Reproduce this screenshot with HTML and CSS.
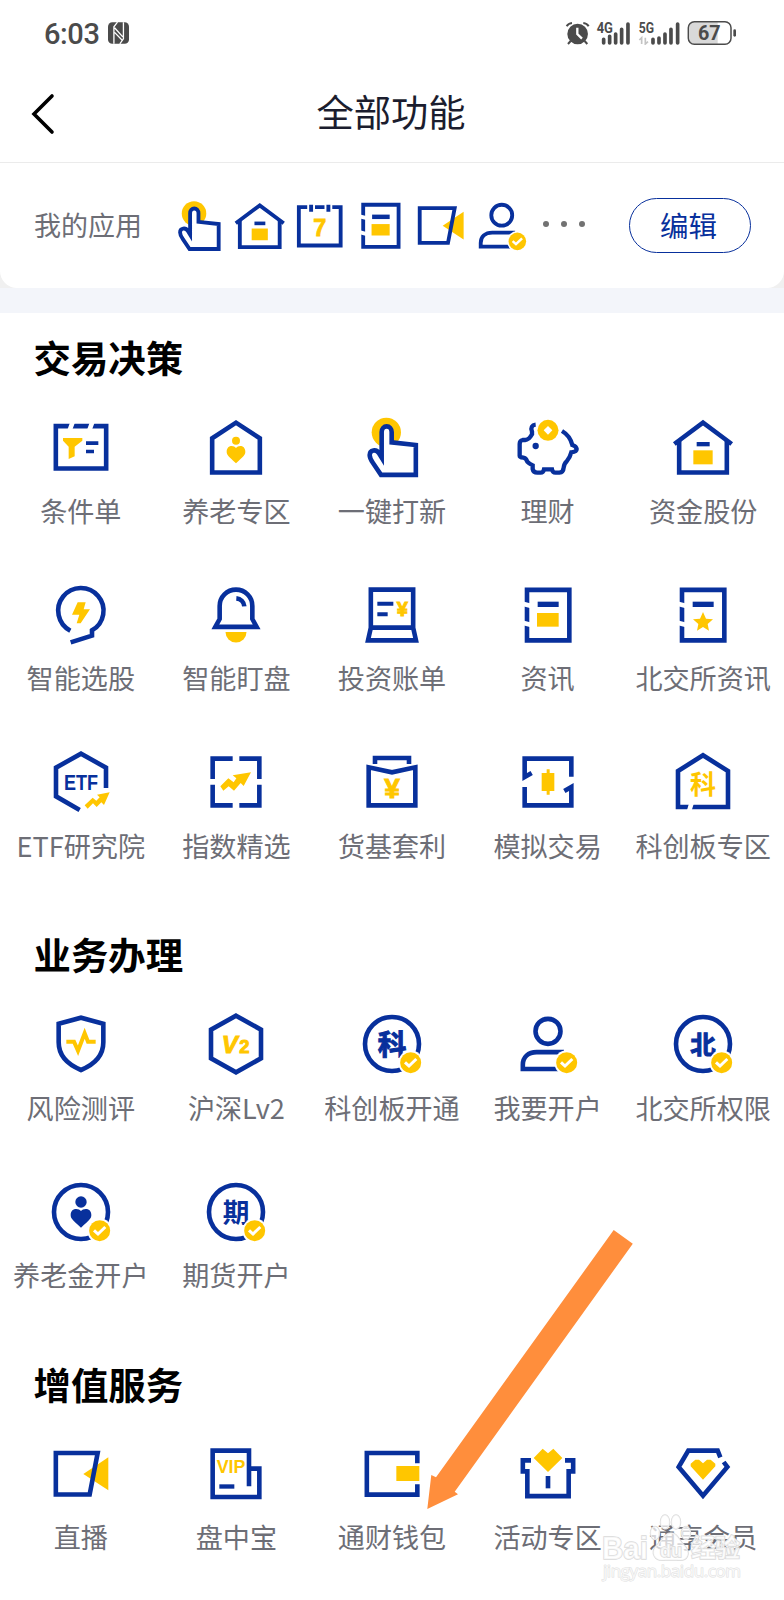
FILE: index.html
```
<!DOCTYPE html>
<html lang="zh-CN">
<head>
<meta charset="utf-8">
<title>全部功能</title>
<link rel="stylesheet" href="styles.css">
</head>
<body>
<svg class="defs" width="0" height="0">
  <symbol id="badge" viewBox="-96 -96 192 192">
    <circle class="w" cx="56" cy="56" r="37"/><circle class="y" cx="56" cy="56" r="31.5"/>
    <path d="M39 55 L51 66 L73 45" fill="none" stroke="#fff" stroke-width="9"/>
  </symbol>
  <symbol id="hand" viewBox="-96 -96 192 192">
    <circle class="y" cx="-17" cy="-44" r="44"/>
    <path class="l wf" d="M-1 -14 V-45 A15 17 0 0 0 -31 -45 V32 L-39 19 C-47 5 -67 8 -67 24 C-67 33 -62 41 -57 48 L-33 83.5 H71.5 V-6 L-1 -14Z"/>
  </symbol>
  <symbol id="house" viewBox="-96 -96 192 192">
    <path class="l" d="M-71.5 -18 V76.5 H71.5 V-18"/><path class="l" d="M-86 -9 L0 -73 L86 -9"/>
    <rect class="b" x="-19" y="-15" width="39" height="13"/><rect class="y" x="-29" y="10" width="58" height="42"/>
  </symbol>
  <symbol id="book" viewBox="-96 -96 192 192">
    <path class="l" d="M-63 -75.5 H64 V76 H-63Z"/><rect class="b" x="-31" y="-40" width="63" height="16"/>
    <path d="M-76 -34 L-50 -27 M-76 23 L-50 30" fill="none" stroke="#fff" stroke-width="14"/>
  </symbol>
  <symbol id="video" viewBox="-96 -96 192 192">
    <path class="y" d="M7 0 L82 -50 V49Z"/><path class="l" d="M-75.5 -63 H50 L26 61.5 H-75.5Z"/>
  </symbol>
  <symbol id="person" viewBox="-96 -96 192 192">
    <circle class="l" cx="0" cy="-38" r="37.5"/>
    <path class="l" d="M48 24.5 H-34 C-60 24.5 -75.5 40 -75.5 62 V75 H40"/><use href="#badge" x="-96" y="-96" width="192" height="192"/>
  </symbol>
</svg>

<div class="status">
  <span class="time">6:03</span>
  <svg class="nfc" viewBox="0 0 64 66"><rect width="64" height="66" rx="13" fill="#4b4b4b"/><path d="M18 66 V14 L29 0 M20 17 L45 45 M20 31 L44 56 M47 0 V51 L36 66" fill="none" stroke="#fff" stroke-width="4"/></svg>
  <div class="signals">
    <svg width="25.3" height="24.7" viewBox="518 62 76 74"><circle cx="556" cy="101" r="31" fill="#4b4b4b"/><path d="M523 78 Q528 69 539 68 M589 78 Q584 69 573 68 M535 122 L527 131 M577 122 L585 131" fill="none" stroke="#4b4b4b" stroke-width="6"/><path d="M555 82 V101 L569 115" fill="none" stroke="#fff" stroke-width="7"/></svg>
    <svg width="35.3" height="24.7" viewBox="614 62 106 74"><text class="net" x="616" y="98" textLength="49" lengthAdjust="spacingAndGlyphs">4G</text><path class="bars" d="M637 117 V128 M655 108 V128 M673 101 V128 M691 87 V128 M710 71 V128"/></svg>
    <svg width="43.3" height="24.7" viewBox="738 62 130 74"><text class="net" x="740" y="98" textLength="46" lengthAdjust="spacingAndGlyphs">5G</text><path d="M742 119 L749 112 V131 M768 124 L760 131 V112" fill="none" stroke="#c4c4c4" stroke-width="5"/><path class="bars" d="M783 117 V128 M801 113 V128 M819 101 V128 M837 87 V128 M857 71 V128"/></svg>
    <svg width="50" height="26" viewBox="886 60 150 78"><path d="M906 67 H978 V131 H906 Q893 131 893 118 V80 Q893 67 906 67Z" fill="#d9d9d9"/><rect x="890" y="65" width="128" height="68" rx="18" fill="none" stroke="#4b4b4b" stroke-width="4.5"/><path d="M1029 92 V106" stroke="#4b4b4b" stroke-width="8" stroke-linecap="round"/><text x="953" y="121" text-anchor="middle" class="bat" textLength="68" lengthAdjust="spacingAndGlyphs">67</text></svg>
  </div>
</div>

<div class="header">
  <svg class="back" width="24" height="42" viewBox="0 0 24 42"><path d="M21 3 L3 21 L21 39" fill="none" stroke="#000" stroke-width="3.6" stroke-linecap="round"/></svg>
  <h1 class="title">全部功能</h1>
</div>

<div class="mine-wrap">
  <div class="mine">
    <span class="mine-label">我的应用</span>
    <div class="mine-icons">
      <svg><use href="#hand"/></svg>
      <svg><use href="#house"/></svg>
      <svg viewBox="-96 -96 192 192"><path class="l" d="M-75 -67 H75 V71 H-75Z"/><path class="w" d="M-45 -76 H-17 V-58 H-45Z M17 -76 H45 V-58 H17Z"/><path class="b" d="M-38 -75 H-24 V-50 H-38Z M24 -75 H38 V-50 H24Z"/><text class="t y bold" x="0" y="38" font-size="84">7</text></svg>
      <svg viewBox="-96 -96 192 192"><use href="#book" x="-96" y="-96" width="192" height="192"/><rect class="y" x="-33" y="-6" width="65" height="41"/></svg>
      <svg><use href="#video"/></svg>
      <svg><use href="#person"/></svg>
    </div>
    <div class="dots"><i></i><i></i><i></i></div>
    <button class="edit">编辑</button>
  </div>
</div>

<section class="section first">
  <h2 class="heading">交易决策</h2>
  <div class="grid">
    <div class="cell"><svg class="icon" viewBox="-96 -96 192 192"><path class="l" d="M-75.5 -62.5 H75.5 V64.5 H-75.5Z"/><path d="M-34 -50 L-25 -75 M25 -50 L34 -75" stroke="#fff" stroke-width="14"/><path class="y" d="M-54 -27 H4 V-19 L-19 -1 V28 L-37 36 V-1 L-54 -19Z"/><path class="b" d="M15 -17 H52 V-6 H15Z M15 8 H39 V19 H15Z"/></svg><span class="label">条件单</span></div>
    <div class="cell"><svg class="icon" viewBox="-96 -96 192 192"><path class="l" d="M-71.5 76.5 V-26 L0 -73 L71.5 -26 V76.5Z"/><circle class="y" cx="0" cy="-19" r="12"/><path class="y" d="M0 3 C-7 -7 -28 -6 -28 14 C-28 25 -22 27 0 49 C22 27 28 25 28 14 C28 -6 7 -7 0 3Z"/></svg><span class="label">养老专区</span></div>
    <div class="cell"><svg class="icon"><use href="#hand"/></svg><span class="label">一键打新</span></div>
    <div class="cell"><svg class="icon" viewBox="-96 -96 192 192"><path class="l pig" d="M-37 -67 C-48 -66 -53 -58 -48 -46 V-38 C-54 -27 -59 -21 -68 -21 H-76 Q-85 -19 -85 -9 V26 Q-85 31 -74 32 Q-66 33 -62 44 Q-56 50 -46 55 V66 Q-44 77 -32 77 H-22 Q-14 77 -12 67 H12 Q14 77 22 77 H34 Q46 76 47 62 Q48 50 56 43 Q66 32 70 16 Q86 14 86 6 Q85 -2 73 -6 Q66 -34 42 -48"/><circle class="b" cx="-37" cy="-3" r="9.5"/><circle class="y" cx="0" cy="-50" r="31.5"/><path class="w" d="M0 -63 L13 -50 L0 -37 L-13 -50Z"/></svg><span class="label">理财</span></div>
    <div class="cell"><svg class="icon"><use href="#house"/></svg><span class="label">资金股份</span></div>

    <div class="cell"><svg class="icon" viewBox="-96 -96 192 192"><path class="l" d="M-32 47 A68 68 0 1 1 33 46 V62 L-31 82"/><path class="y" d="M-10 -38 H14 L8 -17 H27 L-1 25 H-13 L-5 -1 H-27Z"/></svg><span class="label">智能选股</span></div>
    <div class="cell"><svg class="icon" viewBox="-96 -96 192 192"><path class="l" d="M-62 35.5 L-49 12 V-27 A49 49 0 0 1 49 -27 V12 L62 35.5Z M1 -50 A26 26 0 0 1 25 -26"/><path class="y" d="M-31.5 51 A31.5 31.5 0 0 0 31.5 51Z"/></svg><span class="label">智能盯盘</span></div>
    <div class="cell"><svg class="icon" viewBox="-96 -96 192 192"><path class="l" d="M-63.5 38 V-76 H63.5 V38Z L-72 76 H72 L63.5 38"/><path class="b" d="M-44 -40 H4 V-28 H-44Z M-44 -8 H-13 V4 H-44Z"/><text class="t y bold" x="31" y="3" font-size="60">¥</text></svg><span class="label">投资账单</span></div>
    <div class="cell"><svg class="icon" viewBox="-96 -96 192 192"><use href="#book" x="-96" y="-96" width="192" height="192"/><rect class="y" x="-33" y="-6" width="65" height="41"/></svg><span class="label">资讯</span></div>
    <div class="cell"><svg class="icon" viewBox="-96 -96 192 192"><use href="#book" x="-96" y="-96" width="192" height="192"/><path class="y" d="M0 -9 L9 11 L30 13 L14 27 L18 47 L0 36 L-18 47 L-14 27 L-30 13 L-9 11Z"/></svg><span class="label">北交所资讯</span></div>

    <div class="cell"><svg class="icon" viewBox="-96 -96 192 192"><path class="l" d="M75 18 V-43 L0 -85 L-75 -43 V43 L-4 84"/><text class="t b" x="0" y="24" font-size="67" textLength="102" lengthAdjust="spacingAndGlyphs">ETF</text><path class="y" d="M11 70 L35 47 L46 56 L56 46 L48 38 L86 31 L69 69 L61 61 L47 75 L36 64 L20 80Z"/></svg><span class="label">ETF研究院</span></div>
    <div class="cell"><svg class="icon" viewBox="-96 -96 192 192"><path class="l" d="M-10 -70 H-70 V-9 M10 -70 H70 V-9 M-10 70 H-70 V8 M10 70 H70 V8"/><path class="y" d="M-47 13 L-23 -11 L-7 1 L1 -11 L-10 -20 L45 -29 L23 12 L14 3 L-6 26 L-22 13 L-38 26Z"/></svg><span class="label">指数精选</span></div>
    <div class="cell"><svg class="icon" viewBox="-96 -96 192 192"><path class="l" d="M-51 -54 V-72 H51 V-54 M-70 -44 V70 H70 V-44 L0 -29Z"/><text class="t y bold" x="0" y="47" font-size="84">¥</text></svg><span class="label">货基套利</span></div>
    <div class="cell"><svg class="icon" viewBox="-96 -96 192 192"><path class="l" d="M-49 -27 L-70 -15 V-70 H70 V-16 M49 27 L70 15 V70 H-70 V15"/><path class="y" d="M-19 -27 H-4 V-38 H5 V-27 H19 V27 H5 V38 H-4 V27 H-19Z"/></svg><span class="label">模拟交易</span></div>
    <div class="cell"><svg class="icon" viewBox="-96 -96 192 192"><path class="l" d="M-75 75 V-33 L0 -80 L75 -33 V75Z"/><path d="M-42 88 L-34 62" stroke="#fff" stroke-width="14"/><text class="t y" x="0" y="35" font-size="78">科</text></svg><span class="label">科创板专区</span></div>
  </div>
</section>

<section class="section">
  <h2 class="heading">业务办理</h2>
  <div class="grid">
    <div class="cell"><svg class="icon" viewBox="-96 -96 192 192"><path class="l" d="M-67 -61 L0 -79 L67 -61 V-5 C67 35 44 60 0 78 C-44 60 -67 35 -67 -5Z"/><path d="M-44 -7 H-21 L-9 20 L11 -32 L21 -7 H44" fill="none" stroke="#ffc600" stroke-width="12"/></svg><span class="label">风险测评</span></div>
    <div class="cell"><svg class="icon" viewBox="-96 -96 192 192"><path class="l" d="M0 -85 L75 -43 V43 L0 85 L-75 43 V-43Z"/><text class="t y bold" x="-19" y="26" font-size="72" font-style="italic">V</text><text class="t y bold" x="25" y="26" font-size="55">2</text></svg><span class="label">沪深Lv2</span></div>
    <div class="cell"><svg class="icon" viewBox="-96 -96 192 192"><circle class="l" r="81"/><text class="t b bold" x="0" y="32" font-size="86">科</text><use href="#badge" x="-96" y="-96" width="192" height="192"/></svg><span class="label">科创板开通</span></div>
    <div class="cell"><svg class="icon"><use href="#person"/></svg><span class="label">我要开户</span></div>
    <div class="cell"><svg class="icon" viewBox="-96 -96 192 192"><circle class="l" r="81"/><text class="t b bold" x="0" y="29" font-size="76">北</text><use href="#badge" x="-96" y="-96" width="192" height="192"/></svg><span class="label">北交所权限</span></div>

    <div class="cell"><svg class="icon" viewBox="-96 -96 192 192"><circle class="l" r="81"/><circle class="b" cx="0" cy="-30" r="17"/><path class="b" d="M0 -3 C-7 -12 -31 -13 -31 9 C-31 20 -25 24 0 47 C25 24 31 20 31 9 C31 -13 7 -12 0 -3Z"/><use href="#badge" x="-96" y="-96" width="192" height="192"/></svg><span class="label">养老金开户</span></div>
    <div class="cell"><svg class="icon" viewBox="-96 -96 192 192"><circle class="l" r="81"/><text class="t b" x="0" y="31" font-size="80">期</text><use href="#badge" x="-96" y="-96" width="192" height="192"/></svg><span class="label">期货开户</span></div>
  </div>
</section>

<section class="section">
  <h2 class="heading">增值服务</h2>
  <div class="grid">
    <div class="cell"><svg class="icon"><use href="#video"/></svg><span class="label">直播</span></div>
    <div class="cell"><svg class="icon" viewBox="-96 -96 192 192"><path class="l" d="M39 37 V-70 H-70 V69 H70 V-16 H39"/><rect class="b" x="-50" y="31" width="45" height="13"/><text class="t y" x="-15" y="-4" font-size="53" textLength="86" lengthAdjust="spacingAndGlyphs">VIP</text></svg><span class="label">盘中宝</span></div>
    <div class="cell"><svg class="icon" viewBox="-96 -96 192 192"><path class="l" d="M76 -32 V-63 H-75.5 V62 H76 V31"/><rect class="y" x="13" y="-24" width="69" height="45"/></svg><span class="label">通财钱包</span></div>
    <div class="cell"><svg class="icon" viewBox="-96 -96 192 192"><path class="l" d="M-51 -41 H-75.5 V-8 H-62 V66.5 H62 V-8 H75.5 V-41 H51"/><path class="w" d="M-58 -49 L-48 -48 L0 2 L48 -48 L58 -49 L50 -60 H-50Z"/><path class="y" d="M-43 -48 L-16 -76 L0 -62 L16 -76 L43 -48 L0 -6Z"/><rect class="b" x="-7" y="6" width="14" height="37"/></svg><span class="label">活动专区</span></div>
    <div class="cell"><svg class="icon" viewBox="-96 -96 192 192"><path class="l" d="M52 -50 L44 -70 H-44 L-73 -21 L0 65 L73 -21 L62 -36"/><path class="y" d="M-37 -23 V-31 L-23 -43 H-12 L0 -32 L12 -43 H23 L37 -31 V-23 L0 17Z"/></svg><span class="label">通享会员</span></div>
  </div>
</section>

<svg class="overlay" width="784" height="1600" viewBox="0 0 784 1600">
  <path fill="#ff8e3c" d="M613.7 1230 L632.8 1243.7 L454.7 1491.7 L458 1494.3 L427.3 1509 L431.3 1475 L436 1477.3Z"/>
  <g class="mark">
    <text x="602" y="1559" font-size="32" textLength="46" lengthAdjust="spacingAndGlyphs">Bai</text>
    <ellipse cx="655" cy="1533" rx="4.5" ry="6.5"/><ellipse cx="665" cy="1522" rx="4.5" ry="7"/><ellipse cx="676" cy="1522" rx="4.5" ry="7"/><ellipse cx="686" cy="1533" rx="4.5" ry="6.5"/>
    <path d="M671 1533 C664 1533 662 1541 656 1546 C650 1553 655 1562 665 1560 H677 C688 1562 691 1553 685 1546 C679 1541 678 1533 671 1533Z"/>
    <text x="660" y="1557" font-size="18">du</text>
    <text class="cjk" x="691" y="1557" font-size="25" textLength="49">经验</text>
    <text class="url" x="603" y="1577" font-size="17" textLength="138">jingyan.baidu.com</text>
  </g>
</svg>
</body>
</html>
```
FILE: styles.css
```
* { box-sizing: border-box; }
body {
  margin: 0;
  width: 784px;
  height: 1600px;
  position: relative;
  overflow: hidden;
  background: #fff;
  font-family: "Noto Sans CJK SC", sans-serif;
}
.defs { position: absolute; }

/* icon paint */
.l { fill: none; stroke: #08309c; stroke-width: 13.8; }
.pig { stroke-width: 13; }
.wf { fill: #fff; }
.b { fill: #08309c; }
.y { fill: #ffc600; }
.w { fill: #fff; }
.t { font-family: "Liberation Sans", "Noto Sans CJK SC", sans-serif; font-weight: 700; text-anchor: middle; }
.bold { stroke-width: 3; }
.bold.y { stroke: #ffc600; }
.bold.b { stroke: #08309c; }

.status { display: flex; align-items: center; height: 66px; padding: 0 46.7px 0 44px; }
.time { padding-top: 3px; font: 500 29px/1 Roboto, sans-serif; color: #4b4b4b; letter-spacing: -0.4px; }
.nfc { width: 21px; height: 22px; margin-left: 8px; }
.signals { display: flex; align-items: center; gap: 6.2px; margin-left: auto; }
.net { font: 700 43px Roboto, sans-serif; fill: #4b4b4b; }
.bat { font: 700 63px Roboto, sans-serif; fill: #4b4b4b; }
.bars { fill: none; stroke: #4b4b4b; stroke-width: 11; stroke-linecap: round; }

.header {
  display: grid;
  grid-template-columns: 120px 1fr 122px;
  align-items: center;
  height: 97px;
  border-bottom: 1px solid #ebebeb;
}
.back { margin-left: 31px; }
.title { margin: 0; padding-bottom: 7px; text-align: center; font-size: 37.3px; line-height: 50px; font-weight: 400; color: #1b1d2e; }

.mine-wrap { background: linear-gradient(#f0f0f0 125px, #f3f5fa 125px); padding-bottom: 25px; }
.mine {
  display: flex;
  align-items: center;
  height: 125px;
  padding: 0 33.5px 0 34px;
  background: #fff;
  border-radius: 0 0 17px 17px;
}
.mine-label { width: 108px; font-size: 27px; line-height: 36px; padding-bottom: 1px; color: #6d6e76; white-space: nowrap; }
.mine-icons { display: flex; gap: 7px; margin-left: 30.3px; }
.mine-icons svg { width: 53.5px; height: 53.5px; }
.dots { display: flex; gap: 12px; margin-left: 14.5px; padding-bottom: 4px; }
.dots i { width: 6px; height: 6px; border-radius: 50%; background: #727272; }
.edit {
  width: 122px;
  height: 55px;
  margin-left: auto;
  padding: 0 2px 1px 0;
  border: 1px solid #08309c;
  border-radius: 28px;
  background: #fff;
  color: #08309c;
  font: 400 28.5px/1 "Noto Sans CJK SC", sans-serif;
}

.section { padding-top: 60px; }
.section.first { padding-top: 14px; }
.heading { margin: 0 0 28px; padding-left: 33.5px; font-size: 37.4px; line-height: 60px; font-weight: 700; color: #000; }
.grid { display: grid; grid-template-columns: repeat(5, 155.6px); row-gap: 53.5px; padding: 0 3px; }
.cell { display: flex; flex-direction: column; align-items: center; height: 114px; }
.icon { width: 64px; height: 64px; flex: none; }
.label { margin-top: 13.5px; font-size: 27.1px; line-height: 36px; color: #6d6e76; white-space: nowrap; }

.overlay { position: absolute; left: 0; top: 0; pointer-events: none; }
.mark { fill: #fff; fill-opacity: .72; stroke: #dadada; stroke-width: 1.5; paint-order: stroke; font-family: "Liberation Sans", sans-serif; font-weight: 700; }
.mark .cjk { font-family: "Noto Sans CJK SC", sans-serif; }
.mark .url { font-family: "Open Sans", sans-serif; font-weight: 400; stroke-width: 1; stroke: #e0e0e0; }
```
